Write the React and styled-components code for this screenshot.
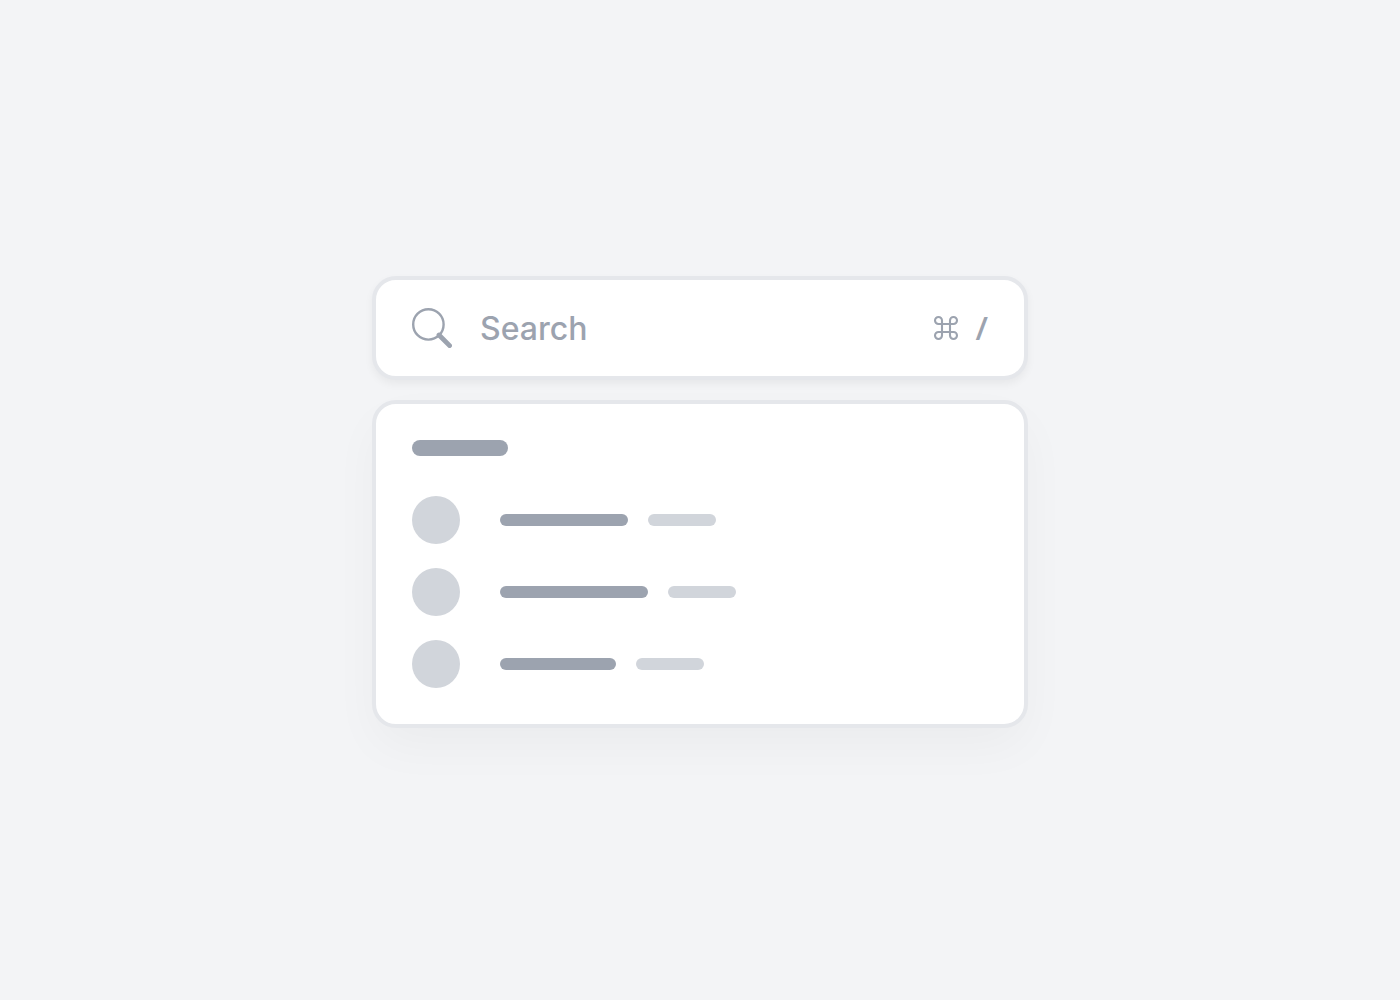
import React, { useState } from "react";
import styled, { createGlobalStyle } from "styled-components";

const results = [
  { id: 1, title: 128, detail: 68 },
  { id: 2, title: 148, detail: 68 },
  { id: 3, title: 116, detail: 68 },
];

function SearchIcon() {
  return (
    <S.Icon viewBox="0 0 40 40" aria-hidden="true">
      <circle cx="16.4" cy="16.4" r="15.2" strokeWidth="2.4" />
      <path d="M27 27 L37.6 37.6" strokeWidth="4.8" strokeLinecap="round" />
    </S.Icon>
  );
}

function CommandIcon() {
  return (
    <S.CommandIcon viewBox="0 0 24 24" role="img" aria-label="Command">
      <path
        d="M8 8V4.5A3.5 3.5 0 1 0 4.5 8H19.5A3.5 3.5 0 1 0 16 4.5V19.5A3.5 3.5 0 1 0 19.5 16H4.5A3.5 3.5 0 1 0 8 19.5Z"
        strokeWidth="2.1"
      />
    </S.CommandIcon>
  );
}

function App() {
  const [query, setQuery] = useState("");
  return (
    <>
      <GlobalStyle />
      <S.Page>
        <S.Palette>
          <S.SearchBar>
            <SearchIcon />
            <S.Input
              type="text"
              aria-label="Search"
              placeholder="Search"
              value={query}
              onChange={(e) => setQuery(e.target.value)}
            />
            <S.Shortcut>
              <CommandIcon />
              <S.Key>/</S.Key>
            </S.Shortcut>
          </S.SearchBar>
          <S.Results>
            <S.Heading />
            <S.List>
              {results.map(({ id, title, detail }) => (
                <S.Item key={id}>
                  <S.Avatar />
                  <S.Line $width={title} />
                  <S.Line $width={detail} $light />
                </S.Item>
              ))}
            </S.List>
          </S.Results>
        </S.Palette>
      </S.Page>
    </>
  );
}

const GlobalStyle = createGlobalStyle`
  * {
    box-sizing: border-box;
  }

  body {
    margin: 0;
    background: #f3f4f6;
    font-family: Inter, "Liberation Sans", sans-serif;
  }
`;

const Card = styled.div`
  background: #ffffff;
  border: 4px solid #e5e7eb;
  border-radius: 24px;
`;

// S is for Search
const S = {
  Page: styled.main`
    min-height: 100vh;
    display: flex;
    align-items: center;
    justify-content: center;
    padding: 20px 16px 16px;
  `,
  Palette: styled.div`
    width: 100%;
    max-width: 656px;
    display: flex;
    flex-direction: column;
    gap: 20px;
  `,
  SearchBar: styled(Card)`
    display: flex;
    align-items: center;
    gap: 28px;
    padding: 28px 36px;
    box-shadow: 0 4px 8px rgba(0, 0, 0, 0.05);
  `,
  Icon: styled.svg`
    flex: none;
    width: 40px;
    height: 40px;
    fill: none;
    stroke: #9ca3af;
  `,
  CommandIcon: styled.svg`
    flex: none;
    width: 24px;
    height: 24px;
    fill: none;
    stroke: #9ca3af;
    overflow: visible;
  `,
  Input: styled.input`
    flex: 1;
    min-width: 0;
    height: 40px;
    padding: 0;
    border: none;
    outline: none;
    background: transparent;
    color: #4b5563;
    font-family: inherit;
    font-size: 32px;
    font-weight: 500;

    &::placeholder {
      color: #9ca3af;
      opacity: 1;
    }
  `,
  Shortcut: styled.span`
    display: flex;
    align-items: center;
    gap: 18px;
  `,
  Key: styled.kbd`
    color: #9ca3af;
    font-family: "Open Sans", "Noto Sans", sans-serif;
    font-size: 32px;
    font-weight: 600;
    line-height: 40px;
  `,
  Results: styled(Card)`
    padding: 36px;
    box-shadow: 0 20px 50px -4px rgba(0, 0, 0, 0.04);
  `,
  Heading: styled.div`
    width: 96px;
    height: 16px;
    border-radius: 8px;
    background: #9ca3af;
  `,
  List: styled.ul`
    display: flex;
    flex-direction: column;
    gap: 24px;
    margin: 40px 0 0;
    padding: 0;
    list-style: none;
  `,
  Item: styled.li`
    display: flex;
    align-items: center;
    gap: 20px;
  `,
  Avatar: styled.span`
    width: 48px;
    height: 48px;
    margin-right: 20px;
    border-radius: 50%;
    background: #d1d5db;
  `,
  Line: styled.span`
    width: ${({ $width }) => $width}px;
    height: 12px;
    border-radius: 6px;
    background: ${({ $light }) => ($light ? "#d1d5db" : "#9ca3af")};
  `,
};

export default App;
